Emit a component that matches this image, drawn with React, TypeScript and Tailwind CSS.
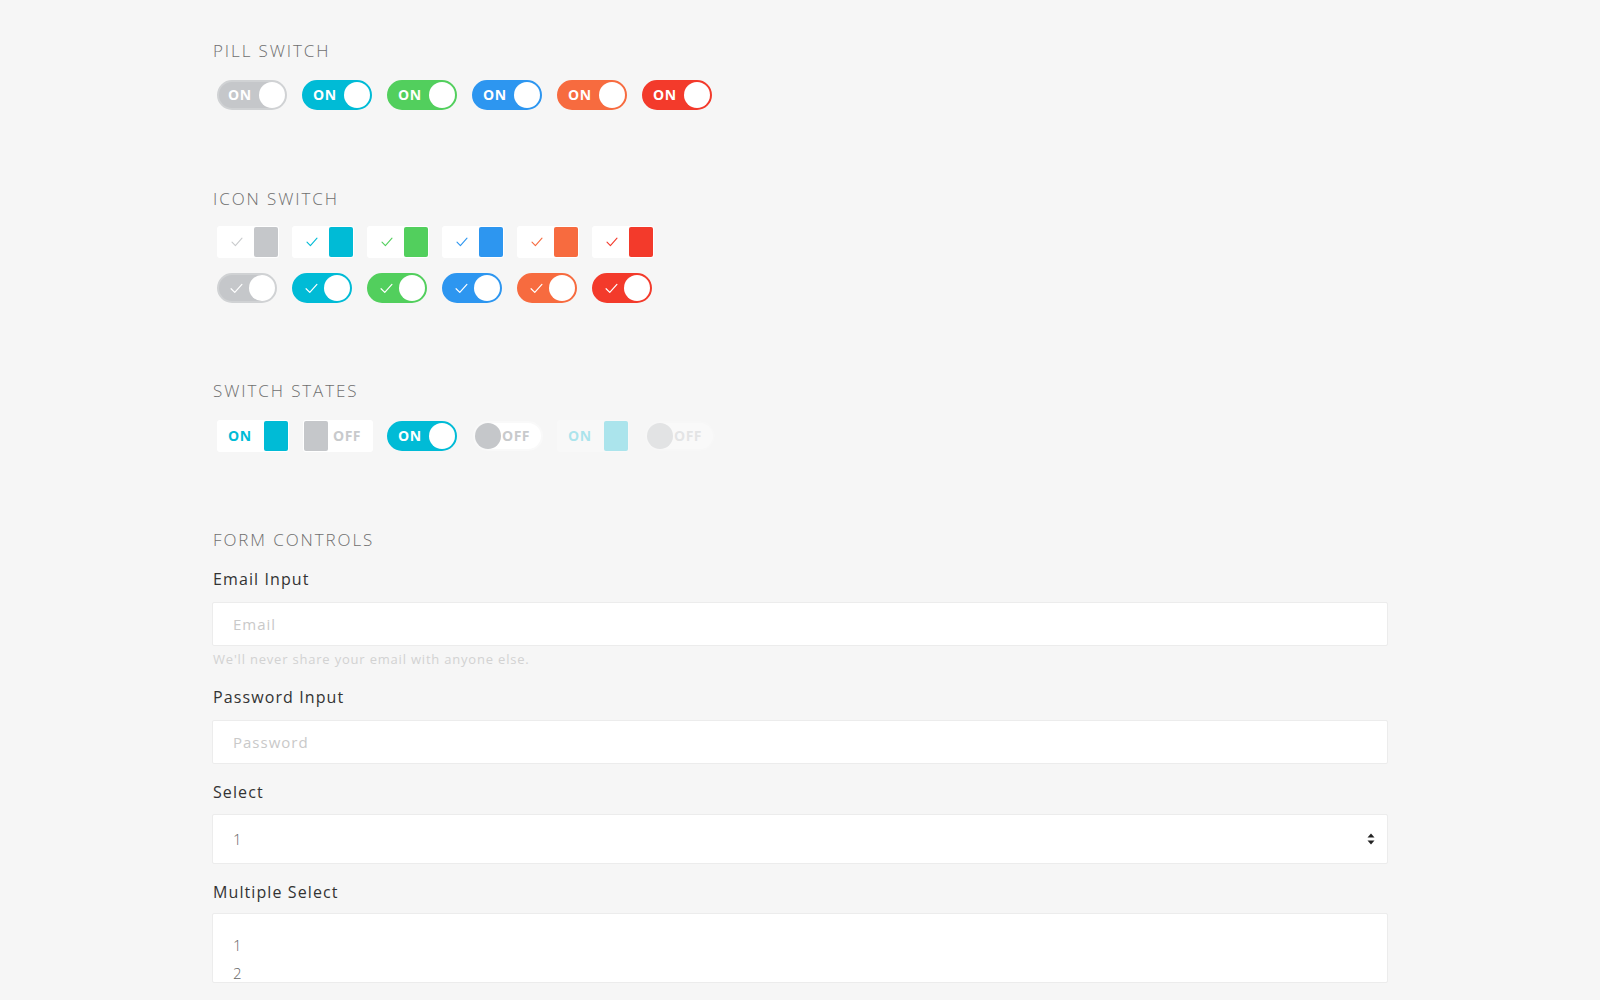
import React from "react";

const FONT = { fontFamily: '"Open Sans", "Liberation Sans", sans-serif' };

const COLORS = [
  { bg: "bg-[#c5c7ca]", border: "border-[#d0d2d4]", text: "text-[#c5c7ca]", stroke: "#c9cbcd" },
  { bg: "bg-[#00bbd6]", border: "border-[#00bbd6]", text: "text-[#00bbd6]", stroke: "#00bbd6" },
  { bg: "bg-[#52cf5d]", border: "border-[#52cf5d]", text: "text-[#52cf5d]", stroke: "#52cf5d" },
  { bg: "bg-[#2d96f0]", border: "border-[#2d96f0]", text: "text-[#2d96f0]", stroke: "#2d96f0" },
  { bg: "bg-[#f76b3f]", border: "border-[#f76b3f]", text: "text-[#f76b3f]", stroke: "#f76b3f" },
  { bg: "bg-[#f33a2b]", border: "border-[#f33a2b]", text: "text-[#f33a2b]", stroke: "#f33a2b" },
];

function Check({ color, size = 12 }: { color: string; size?: number }) {
  return (
    <svg width={size} height={size} viewBox="0 0 12 12" fill="none">
      <path d="M1 6.2 L4.4 9.6 L11 2.2" stroke={color} strokeWidth="1.1" strokeLinecap="round" strokeLinejoin="round" />
    </svg>
  );
}

function Heading({ children }: { children: React.ReactNode }) {
  return (
    <div className="text-[17px] leading-[24px] font-light tracking-[1.9px] text-[#6f6f6f] pl-[1px]">
      {children}
    </div>
  );
}

function Pill({ c }: { c: (typeof COLORS)[number] }) {
  return (
    <div className={`w-[70px] h-[30px] rounded-full border-2 ${c.border} ${c.bg} flex items-center justify-between`}>
      <span className="pl-[9px] text-[14px] font-bold text-white tracking-[0.5px] leading-none">ON</span>
      <span className="w-[26px] h-[26px] rounded-full bg-white" />
    </div>
  );
}

function IconBox({ c }: { c: (typeof COLORS)[number] }) {
  return (
    <div className="w-[62px] h-[32px] bg-white rounded-[3px] flex items-center justify-between p-[1px]">
      <span className="pl-[13px] flex items-center">
        <Check color={c.stroke} size={12} />
      </span>
      <span className={`w-[24px] h-[30px] rounded-[2px] ${c.bg}`} />
    </div>
  );
}

function IconToggle({ c }: { c: (typeof COLORS)[number] }) {
  return (
    <div className={`w-[60px] h-[30px] rounded-full border-2 ${c.border} ${c.bg} flex items-center justify-between`}>
      <span className="pl-[11px] flex items-center">
        <Check color="#ffffff" size={13} />
      </span>
      <span className="w-[26px] h-[26px] rounded-full bg-white" />
    </div>
  );
}

function StateOnBox({ faded }: { faded?: boolean }) {
  return (
    <div className={`w-[72px] h-[32px] bg-white rounded-[3px] flex items-center justify-between p-[1px] ${faded ? "opacity-30" : ""}`}>
      <span className="pl-[10px] text-[14px] font-bold text-[#00bbd6] tracking-[0.5px] leading-none">ON</span>
      <span className="w-[24px] h-[30px] rounded-[2px] bg-[#00bbd6]" />
    </div>
  );
}

function StateOffBox() {
  return (
    <div className="w-[70px] h-[32px] bg-white rounded-[3px] flex items-center p-[1px]">
      <span className="w-[24px] h-[30px] rounded-[2px] bg-[#c5c7ca]" />
      <span className="pl-[5px] text-[14px] font-bold text-[#c8cacc] tracking-[0.5px] leading-none">OFF</span>
    </div>
  );
}

function StateOffToggle({ faded }: { faded?: boolean }) {
  return (
    <div className={`w-[70px] h-[30px] rounded-full bg-white border-2 border-[#f9f9f9] flex items-center ${faded ? "opacity-40" : ""}`}>
      <span className="w-[26px] h-[26px] rounded-full bg-[#c5c7ca]" />
      <span className="pl-[1px] text-[14px] font-bold text-[#c8cacc] tracking-[0.5px] leading-none">OFF</span>
    </div>
  );
}

function Label({ children }: { children: React.ReactNode }) {
  return <div className="text-[16px] leading-[24px] text-[#333] tracking-[1.1px] pl-[1px]">{children}</div>;
}

export default function App() {
  return (
    <div className="min-h-screen w-full bg-[#f6f6f6]" style={FONT}>
      <div className="w-[1176px] mx-auto pt-[39px] pb-[60px]">
        <Heading>PILL SWITCH</Heading>
        <div className="flex gap-[15px] pl-[5px] mt-[17px]">
          {COLORS.map((c, i) => (
            <Pill key={i} c={c} />
          ))}
        </div>

        <div className="mt-[77px]">
          <Heading>ICON SWITCH</Heading>
        </div>
        <div className="flex gap-[13px] pl-[5px] mt-[15px]">
          {COLORS.map((c, i) => (
            <IconBox key={i} c={c} />
          ))}
        </div>
        <div className="flex gap-[15px] pl-[5px] mt-[15px]">
          {COLORS.map((c, i) => (
            <IconToggle key={i} c={c} />
          ))}
        </div>

        <div className="mt-[76px]">
          <Heading>SWITCH STATES</Heading>
        </div>
        <div className="flex items-center gap-[14px] pl-[5px] mt-[17px]">
          <StateOnBox />
          <StateOffBox />
          <Pill c={COLORS[1]} />
          <div className="ml-[2px]">
            <StateOffToggle />
          </div>
          <StateOnBox faded />
          <div className="ml-[2px]">
            <StateOffToggle faded />
          </div>
        </div>

        <div className="mt-[76px]">
          <Heading>FORM CONTROLS</Heading>
        </div>

        <div className="mt-[15px]">
          <Label>Email Input</Label>
          <input
            type="email"
            placeholder="Email"
            className="mt-[11px] block w-full h-[44px] bg-white border border-[#ececec] rounded-[2px] px-[20px] text-[15px] tracking-[1px] text-[#555] placeholder:text-[#c9c9c9] outline-none"
            style={FONT}
          />
          <div className="mt-[3px] text-[13px] leading-[20px] tracking-[0.8px] text-[#d2d2d2] pl-[1px]">
            We'll never share your email with anyone else.
          </div>
        </div>

        <div className="mt-[16px]">
          <Label>Password Input</Label>
          <input
            type="password"
            placeholder="Password"
            className="mt-[11px] block w-full h-[44px] bg-white border border-[#ececec] rounded-[2px] px-[20px] text-[15px] tracking-[1px] text-[#555] placeholder:text-[#c9c9c9] outline-none"
            style={FONT}
          />
        </div>

        <div className="mt-[16px]">
          <Label>Select</Label>
          <div className="mt-[10px] w-full h-[50px] bg-white border border-[#ececec] rounded-[2px] pl-[20px] pr-[12px] flex items-center justify-between">
            <span className="text-[15px] font-light text-[#666]">1</span>
            <svg width="8" height="12" viewBox="0 0 8 12">
              <path d="M4 0.5 L7.5 4.5 L0.5 4.5 Z" fill="#222" />
              <path d="M4 11.5 L7.5 7.5 L0.5 7.5 Z" fill="#222" />
            </svg>
          </div>
        </div>

        <div className="mt-[16px]">
          <Label>Multiple Select</Label>
          <div className="mt-[9px] w-full h-[70px] bg-white border border-[#ececec] rounded-[2px] pl-[20px] pt-[17px] overflow-hidden">
            <div className="text-[15px] leading-[28px] font-light text-[#666]">1</div>
            <div className="mt-[6px] text-[15px] leading-[16px] font-light text-[#666]">2</div>
          </div>
        </div>
      </div>
    </div>
  );
}
